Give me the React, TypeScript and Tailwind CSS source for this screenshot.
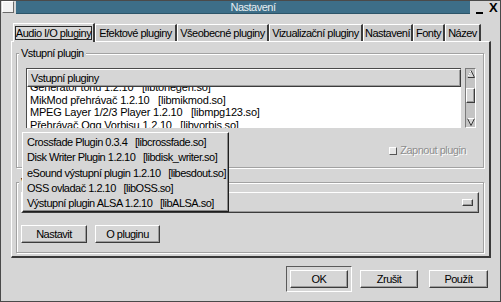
import React from "react";

const raised =
  "border border-t-white border-l-white border-r-[#3c3c3c] border-b-[#3c3c3c] shadow-[inset_-1px_-1px_0_#9c9c9c]";

function Frame({ label, className, children }: { label: string; className: string; children?: React.ReactNode }) {
  return (
    <div className={"relative border border-[#a2a2a2] shadow-[inset_1px_1px_0_#ffffff,1px_1px_0_#ffffff] " + className}>
      <span className="absolute left-[2px] top-[-6px] bg-[#d6d6d6] px-[2px] leading-[11px] whitespace-pre">{label}</span>
      {children}
    </div>
  );
}

export default function App() {
  const tabs = [
    { label: "Audio I/O pluginy", w: "w-[82px]", active: true },
    { label: "Efektové pluginy", w: "w-[82px]", active: false },
    { label: "Všeobecné pluginy", w: "w-[92px]", active: false },
    { label: "Vizualizační pluginy", w: "w-[94px]", active: false },
    { label: "Nastavení", w: "w-[50px]", active: false },
    { label: "Fonty", w: "w-[32px]", active: false },
    { label: "Název", w: "w-[36px]", active: false },
  ];
  const rows = [
    "Generátor tónů 1.2.10   [libtonegen.so]",
    "MikMod přehrávač 1.2.10   [libmikmod.so]",
    "MPEG Layer 1/2/3 Player 1.2.10   [libmpg123.so]",
    "Přehrávač Ogg Vorbisu 1.2.10   [libvorbis.so]",
    "Přehrávač WAV 1.2.10   [libwav.so]",
  ];
  const menu = [
    "Crossfade Plugin 0.3.4   [libcrossfade.so]",
    "Disk Writer Plugin 1.2.10   [libdisk_writer.so]",
    "eSound výstupní plugin 1.2.10   [libesdout.so]",
    "OSS ovladač 1.2.10   [libOSS.so]",
    "Výstupní plugin ALSA 1.2.10   [libALSA.so]",
  ];
  return (
    <div className="w-[501px] h-[302px] bg-[#d6d6d6] border border-[#4a4a4a] relative overflow-hidden font-['Liberation_Sans',Arial,sans-serif] text-[11px] tracking-[-0.5px] text-black leading-none">
      {/* title bar */}
      <div className="flex items-start h-[13px]">
        <div className="ml-[1px] w-[12px] h-[12px] bg-[#f2f2f2] border border-t-white border-l-white border-r-[#6a6a6a] border-b-[#6a6a6a]" />
        <div className="ml-[2px] w-[454px] h-[13px] bg-[#3d6e88] border-b border-[#2c5468] flex items-center justify-center pl-[20px] text-[#e6eef2] text-[11px]">
          Nastavení
        </div>
        <div className="ml-[6px] w-[7px] h-[2px] mt-[11px] bg-black" />
        <div className="ml-[6px] mt-[1px] text-[13px] font-bold leading-[12px] tracking-normal">X</div>
      </div>

      {/* tabs */}
      <div className="flex items-end h-[18px] mt-[9px] ml-[12px] relative z-10">
        {tabs.map((t) =>
          t.active ? (
            <div
              key={t.label}
              className={t.w + " h-[19px] mb-[-1px] bg-[#d6d6d6] border-t border-l border-t-white border-l-white border-r-2 border-r-[#3c3c3c] flex items-start px-[1px] pt-[2px]"}
            >
              <div className="w-full h-[14px] border border-[#2a2a2a] flex items-center justify-center whitespace-pre">{t.label}</div>
            </div>
          ) : (
            <div
              key={t.label}
              className={t.w + " h-[17px] bg-[#cdcdcd] border-t border-l border-t-white border-l-white border-r-2 border-r-[#3c3c3c] flex items-center justify-center whitespace-pre"}
            >
              {t.label}
            </div>
          )
        )}
      </div>

      {/* pane */}
      <div className="ml-[10px] w-[480px] h-[217px] border-t border-l border-t-white border-l-white border-r-2 border-b-2 border-r-[#3a3a3a] border-b-[#3a3a3a] pl-[4px]">
        <Frame label="Vstupní plugin" className="mt-[11px] w-[468px] h-[115px] pt-[14px] pl-[9px]">
          <div className="flex">
            <div className="w-[435px] h-[60px] border-t border-l border-[#4a4a4a] bg-white flex flex-col overflow-hidden">
              <div className={"h-[18px] shrink-0 bg-[#d6d6d6] " + raised + " flex items-center pl-[3px] relative z-10"}>Vstupní pluginy</div>
              <div className="-mt-[6px] pl-[3px] tracking-[-0.2px]">
                {rows.map((r) => (
                  <div key={r} className="h-[12.5px] leading-[12.5px] whitespace-pre">{r}</div>
                ))}
              </div>
            </div>
            <div className="ml-[4px] w-[11px] h-[60px] bg-[#c4c4c4] border border-t-[#7a7a7a] border-l-[#7a7a7a] border-r-white border-b-white flex flex-col items-center">
              <svg width="8" height="8" viewBox="0 0 8 8" className="mt-[1px]">
                <path d="M4 0.5 L7.5 7.5 L0.5 7.5 Z" fill="#d6d6d6" stroke="#3a3a3a" strokeWidth="1" />
                <path d="M4 0.5 L0.5 7.5" stroke="#ffffff" strokeWidth="1" />
              </svg>
              <div className={"mt-[10px] w-[9px] h-[15px] bg-[#d6d6d6] " + raised} />
              <div className="flex-1" />
              <svg width="8" height="8" viewBox="0 0 8 8" className="mb-[1px]">
                <path d="M0.5 0.5 L7.5 0.5 L4 7.5 Z" fill="#d6d6d6" stroke="#3a3a3a" strokeWidth="1" />
                <path d="M0.5 0.5 L7.5 0.5" stroke="#ffffff" strokeWidth="1" />
              </svg>
            </div>
          </div>
          <div className="flex justify-end items-center mt-[17px] pr-[17px] text-[#8e8e8e]">
            <div className="w-[8px] h-[8px] bg-[#e6e6e6] border border-t-white border-l-white border-r-[#555] border-b-[#555] mr-[3px]" />
            <span className="[text-shadow:1px_1px_0_#ffffff]">Zapnout plugin</span>
          </div>
        </Frame>

        <Frame label="Výstupní plugin" className="mt-[14px] w-[468px] h-[71px] pt-[9px] pl-[4px]">
          <div className={"w-[458px] h-[21px] bg-[#d6d6d6] " + raised + " flex items-center justify-end pr-[5px]"}>
            <div className={"w-[11px] h-[7px] bg-[#d6d6d6] " + raised} />
          </div>
          <div className="flex mt-[12px] gap-[8px]">
            <div className={"w-[66px] h-[18px] " + raised + " flex items-center justify-center"}>Nastavit</div>
            <div className={"w-[65px] h-[18px] " + raised + " flex items-center justify-center"}>O pluginu</div>
          </div>
        </Frame>
      </div>

      {/* bottom buttons */}
      <div className="flex items-center mt-[8px] ml-[285px]">
        <div className="w-[66px] h-[26px] border border-t-[#5a5a5a] border-l-[#5a5a5a] border-r-white border-b-white p-[3px]">
          <div className={"w-[58px] h-[18px] " + raised + " flex items-center justify-center"}>OK</div>
        </div>
        <div className={"ml-[8px] w-[58px] h-[18px] " + raised + " flex items-center justify-center"}>Zrušit</div>
        <div className={"ml-[11px] w-[59px] h-[18px] " + raised + " flex items-center justify-center"}>Použít</div>
      </div>

      {/* popup menu */}
      <div className="absolute left-[21px] top-[131px] w-[207px] h-[80px] bg-[#d6d6d6] border border-t-white border-l-white border-r-[#1e1e1e] border-b-[#1e1e1e] shadow-[inset_-1px_-1px_0_#8a8a8a] pt-[2px] pl-[4px] z-20">
        {menu.map((m) => (
          <div key={m} className="h-[15.25px] flex items-center whitespace-pre">{m}</div>
        ))}
      </div>
    </div>
  );
}
